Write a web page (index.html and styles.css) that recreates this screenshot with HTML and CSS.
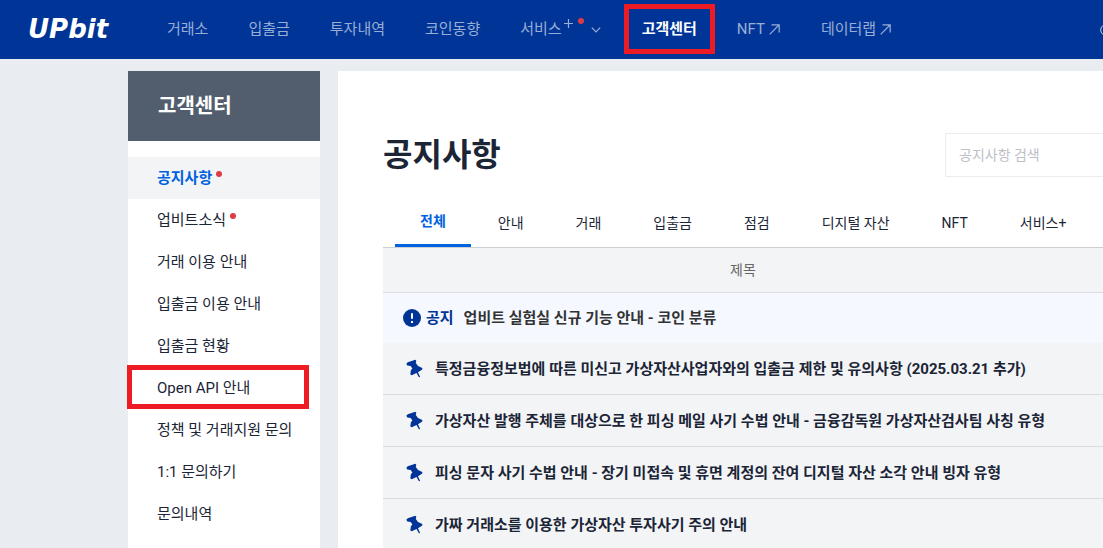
FILE: index.html
```html
<!DOCTYPE html>
<html lang="ko">
<head>
<meta charset="utf-8">
<title>UPbit 고객센터</title>
<link rel="stylesheet" href="styles.css">
</head>
<body>
<svg class="defs" aria-hidden="true">
  <symbol id="pin" viewBox="0 0 17 19">
    <path d="M.3 4.800 1.800 3.300 9.300.8l1 .9-.5 2.400 2.200 2.800 4.300 2.100v1.600l-4.300 2.700 2.100 4.700-1.200.2-2.400-4.200-4.700 2.300-1.500-.7.600-4.300 1.500-1.700-1.800-2.600-3.300-.6z"/>
  </symbol>
  <symbol id="arrow" viewBox="0 0 11 11">
    <path d="M.7 10.300 10 1M2.500.8h7.700v7.700"/>
  </symbol>
</svg>
<header class="header">
  <a class="logo" href="#">UPbit</a>
  <nav class="nav">
    <a href="#">거래소</a>
    <a href="#">입출금</a>
    <a href="#">투자내역</a>
    <a href="#">코인동향</a>
    <a href="#" class="service">서비스<svg class="plus" viewBox="0 0 9 9"><path d="M4.500 0v9M0 4.500h9"/></svg><i class="dot"></i><svg class="chevron" viewBox="0 0 10 6"><path d="M.8.7 5 5 9.200.7"/></svg></a>
    <a href="#" class="current">고객센터</a>
    <a href="#">NFT<svg class="arrow"><use href="#arrow"/></svg></a>
    <a href="#">데이터랩<svg class="arrow"><use href="#arrow"/></svg></a>
  </nav>
  <svg class="more" viewBox="0 0 3 12"><circle cx="6" cy="6" r="5.300"/></svg>
</header>
<div class="page">
  <aside class="side">
    <h2 class="side-title">고객센터</h2>
    <nav class="menu">
      <a href="#" class="selected">공지사항<i class="dot"></i></a>
      <a href="#">업비트소식<i class="dot"></i></a>
      <a href="#">거래 이용 안내</a>
      <a href="#">입출금 이용 안내</a>
      <a href="#">입출금 현황</a>
      <a href="#" class="marked">Open API 안내</a>
      <a href="#">정책 및 거래지원 문의</a>
      <a href="#">1:1 문의하기</a>
      <a href="#">문의내역</a>
    </nav>
  </aside>
  <main class="main">
    <div class="heading">
      <h1>공지사항</h1>
      <input class="search" type="text" placeholder="공지사항 검색" aria-label="공지사항 검색">
    </div>
    <div class="tabs">
      <button type="button" class="active">전체</button>
      <button type="button">안내</button>
      <button type="button">거래</button>
      <button type="button">입출금</button>
      <button type="button">점검</button>
      <button type="button">디지털 자산</button>
      <button type="button">NFT</button>
      <button type="button">서비스+</button>
    </div>
    <table class="list">
      <thead><tr><th>제목</th></tr></thead>
      <tbody>
        <tr class="notice"><td><a href="#"><svg class="alert" viewBox="0 0 18 18"><circle cx="9" cy="9" r="9"/><path d="M9 4.200v5.600M9 12v2"/></svg><span class="label">공지</span>업비트 실험실 신규 기능 안내 - 코인 분류</a></td></tr>
        <tr><td><a href="#"><svg class="pin"><use href="#pin"/></svg>특정금융정보법에 따른 미신고 가상자산사업자와의 입출금 제한 및 유의사항 (2025.03.21 추가)</a></td></tr>
        <tr><td><a href="#"><svg class="pin"><use href="#pin"/></svg>가상자산 발행 주체를 대상으로 한 피싱 메일 사기 수법 안내 - 금융감독원 가상자산검사팀 사칭 유형</a></td></tr>
        <tr><td><a href="#"><svg class="pin"><use href="#pin"/></svg>피싱 문자 사기 수법 안내 - 장기 미접속 및 휴면 계정의 잔여 디지털 자산 소각 안내 빙자 유형</a></td></tr>
        <tr><td><a href="#"><svg class="pin"><use href="#pin"/></svg>가짜 거래소를 이용한 가상자산 투자사기 주의 안내</a></td></tr>
      </tbody>
    </table>
  </main>
</div>
</body>
</html>
```
FILE: styles.css
```css
* { box-sizing: border-box; }
body {
  margin: 0;
  min-height: 100vh;
  display: flex;
  flex-direction: column;
  overflow: hidden;
  background: #e9ecf1;
  color: #1b2536;
  font: 15px/22px Roboto, "Noto Sans CJK KR", sans-serif;
}
a { color: inherit; text-decoration: none; }
h1, h2 { margin: 0; }
svg { fill: none; flex: none; }
.defs { position: absolute; width: 0; height: 0; }

.header {
  display: flex;
  align-items: center;
  height: 59px;
  padding: 0 0 2px 28px;
  background: #003597;
  color: #99aed5;
}
.logo {
  width: 139px;
  color: #fff;
  font: italic bold 26px/30px "DejaVu Sans", sans-serif;
}
.nav { display: flex; flex: 1; gap: 40px; white-space: nowrap; }
.nav a { display: flex; align-items: center; position: relative; }
.nav svg { stroke: #99aed5; stroke-width: 1.200; }
.dot {
  width: 6px;
  height: 6px;
  border-radius: 50%;
  background: #dd3c44;
}
.plus { width: 9px; height: 9px; margin: 0 5px 10px 2px; }
.nav .dot { margin-bottom: 16px; }
.chevron { width: 10px; height: 6px; margin: 2px 1px 0 7px; }
.arrow { width: 11px; height: 11px; margin: 1px 1px 0 4px; }
.nav .current { color: #fff; font-weight: 700; }
.current::after {
  content: "";
  position: absolute;
  inset: -14px -18px;
  border: 5px solid #ed1c24;
}
.more { width: 3px; height: 12px; margin-top: 2px; stroke: #c3cfe6; }

.page { display: flex; flex: 1; gap: 18px; padding: 12px 0 0 128px; }
.side { flex: none; width: 192px; background: #fff; }
.side-title {
  padding: 20px 30px;
  background: #525e6e;
  color: #fff;
  font-size: 20px;
  line-height: 30px;
}
.menu { padding-top: 16px; }
.menu a {
  display: flex;
  gap: 4px;
  position: relative;
  padding: 10px 29px;
  white-space: nowrap;
}
.menu .dot { margin-top: 4px; }
.menu .selected { background: #f3f4f6; color: #0062df; font-weight: 700; }
.marked::after {
  content: "";
  position: absolute;
  inset: -2px 11px 0 -1px;
  border: 5px solid #ed1c24;
}

.main { flex: 1; min-width: 0; padding: 60px 0 0 45px; background: #fff; }
.heading { display: flex; justify-content: space-between; align-items: center; }
h1 { font-size: 32px; line-height: 48px; }
.search {
  width: 158px;
  height: 44px;
  padding: 0 13px;
  border: 1px solid #ebecef;
  border-width: 1px 0 1px 1px;
  border-radius: 2px 0 0 2px;
  background: #fff;
  color: inherit;
  font: inherit;
  font-size: 14px;
}
.search::placeholder { color: #bcbfc6; }
.tabs {
  display: flex;
  margin-top: 18px;
  padding-left: 12px;
  border-bottom: 1px solid #ced0d3;
  white-space: nowrap;
}
.tabs button {
  height: 50px;
  padding: 2px 26px 0;
  border: 0;
  background: none;
  color: inherit;
  font: inherit;
  font-size: 14px;
}
.tabs .active {
  padding: 0 25px;
  border-bottom: 3px solid #0062df;
  color: #0062df;
  font-weight: 700;
}
.tabs .active + button { padding-left: 27px; }
.list { width: 100%; border-spacing: 0; white-space: nowrap; }
.list th {
  height: 45px;
  padding: 0;
  border-bottom: 1px solid #dadcdf;
  background: #f3f4f6;
  color: #666;
  font-size: 14px;
  font-weight: 400;
}
.list td {
  height: 52px;
  padding: 0 0 0 23px;
  border-bottom: 1px solid #dadcdf;
  background: #f3f4f6;
  font-weight: 700;
}
.list td a { display: flex; align-items: center; }
.list .notice td {
  height: 50px;
  padding-left: 20px;
  border: 0;
  background: #f5f8ff;
  color: #333;
}
.label { margin: 0 10px 0 5px; color: #003597; }
.alert { width: 18px; height: 18px; fill: #003597; stroke: #fff; stroke-width: 2; }
.alert circle { stroke: none; }
.pin { width: 17px; height: 19px; margin-right: 12px; fill: #003597; }
```
